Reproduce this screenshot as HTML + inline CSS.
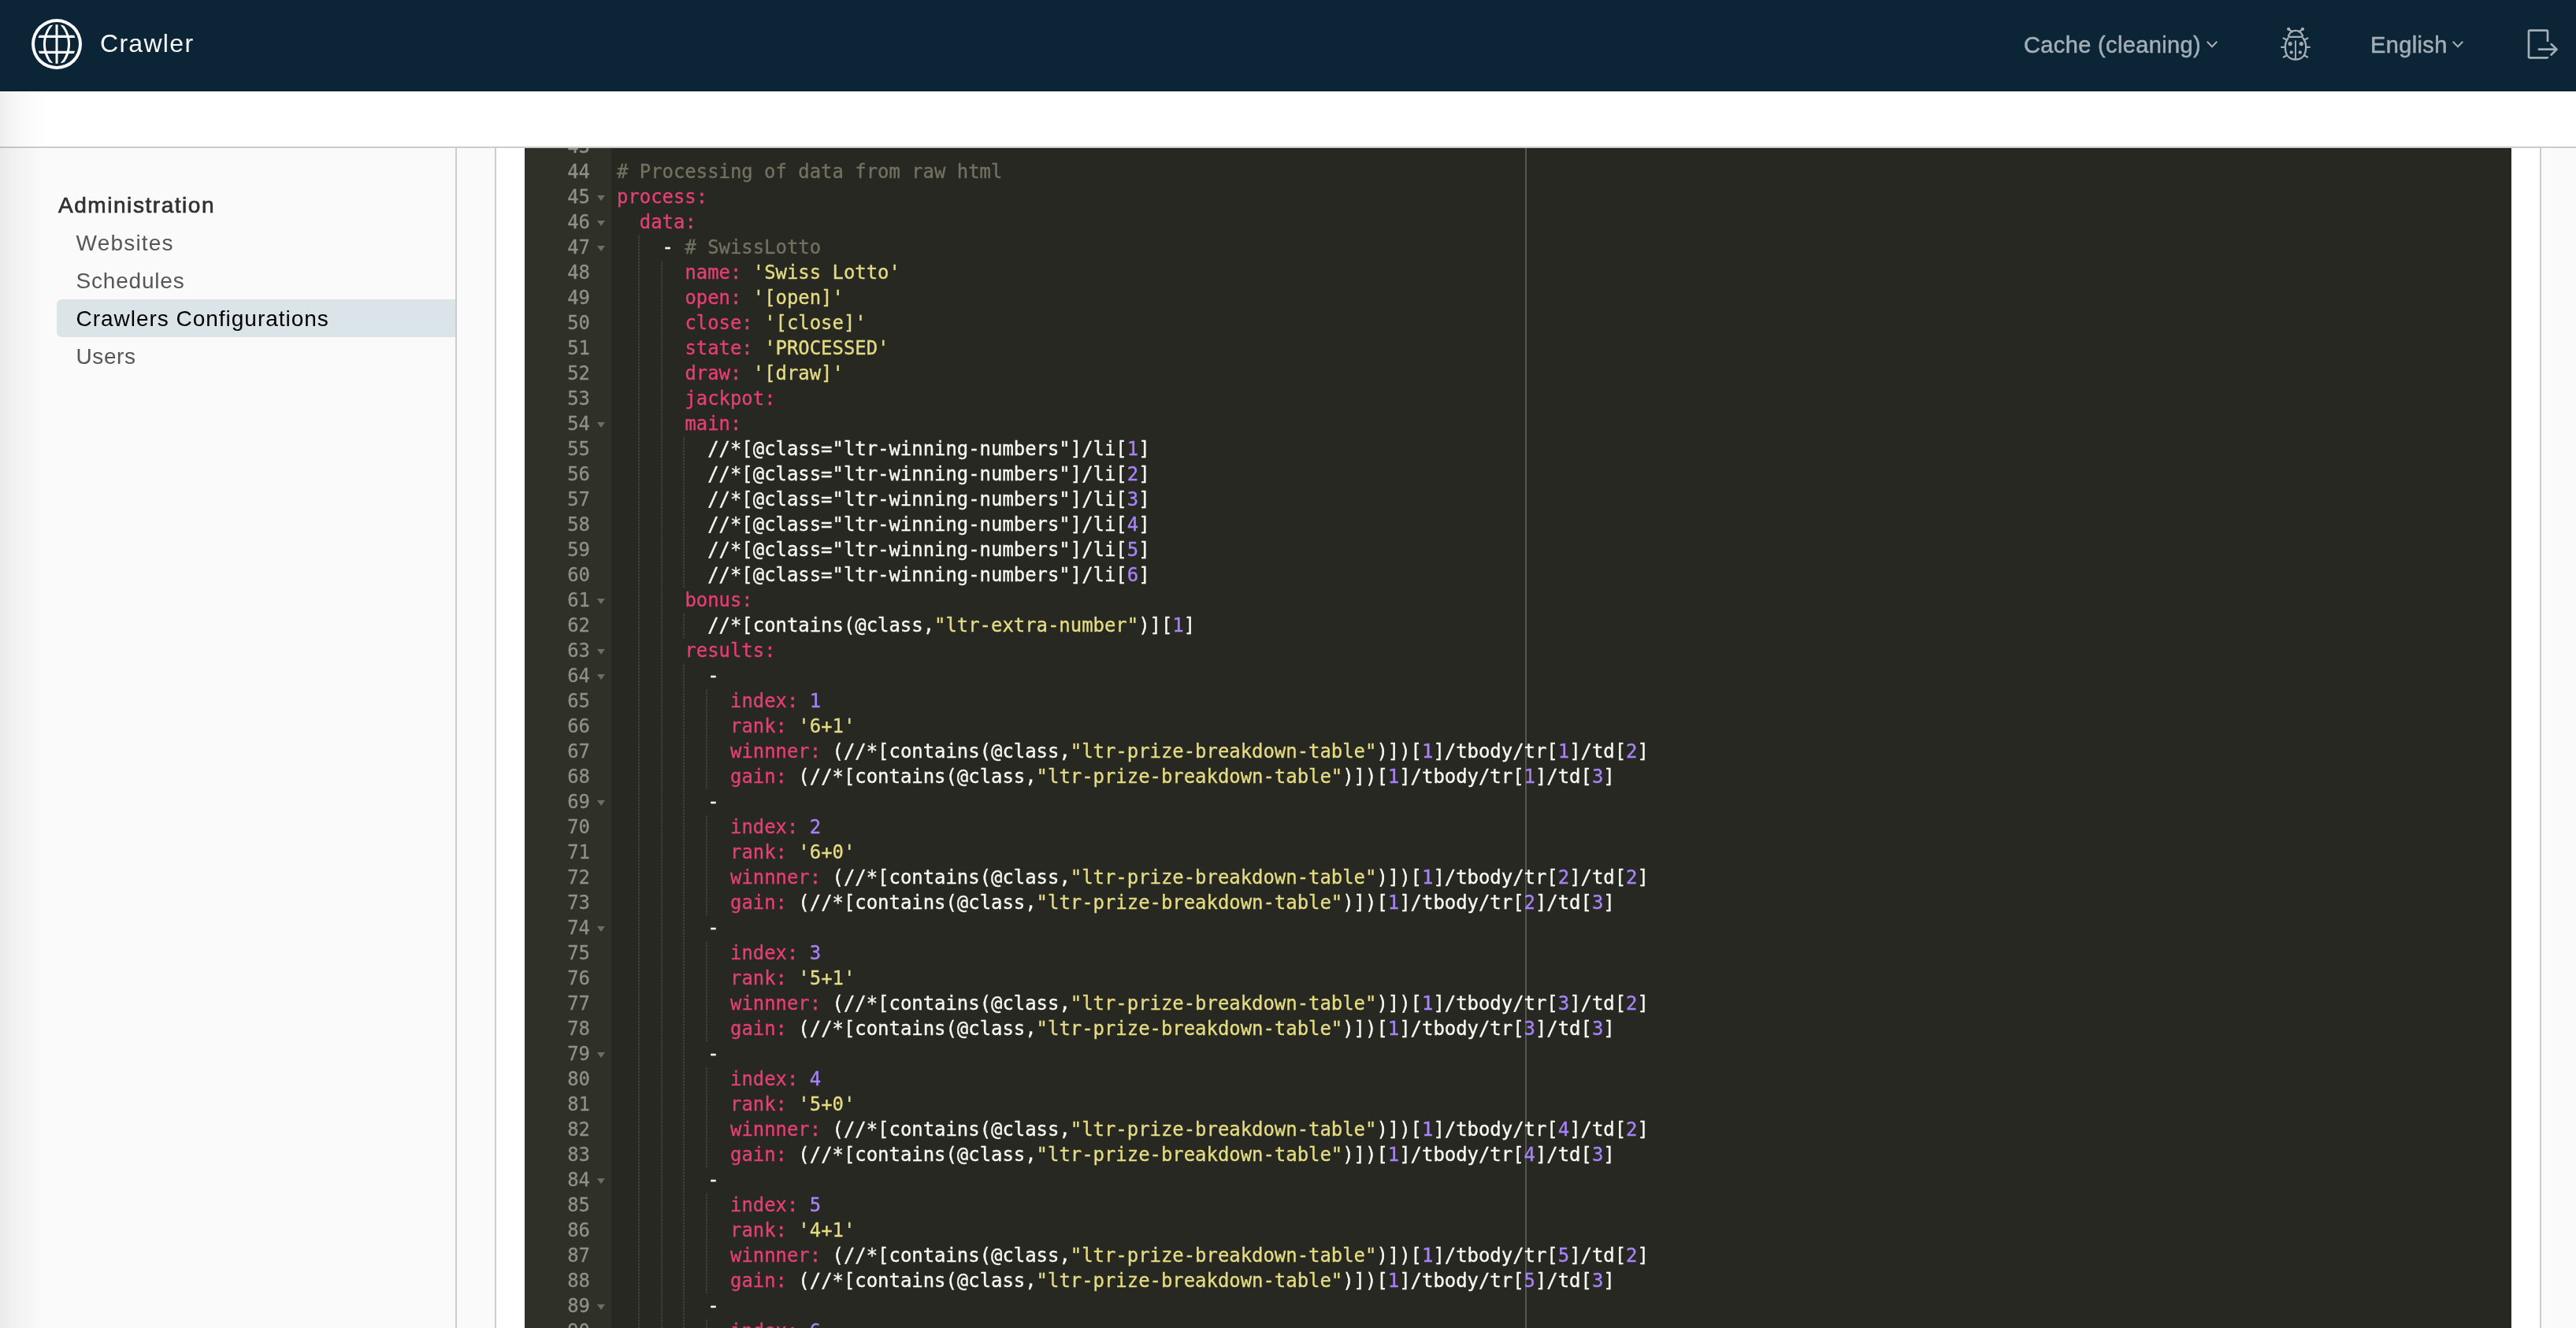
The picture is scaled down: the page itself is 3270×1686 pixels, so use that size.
<!DOCTYPE html>
<html lang="en">
<head>
<meta charset="utf-8">
<title>Crawler</title>
<style>
*{box-sizing:border-box;margin:0;padding:0}
html,body{width:3270px;height:1686px;overflow:hidden;background:#fafafa}
body{position:relative;font-family:"Liberation Sans",sans-serif;color:#565656}
.abs{position:absolute}
/* header */
#hdr{position:absolute;left:0;top:0;width:3270px;height:116px;background:#0b2436}
#hdr .title{will-change:transform;position:absolute;left:126.5px;top:35px;font-size:32px;line-height:40px;color:#fafafa;letter-spacing:1.3px;white-space:nowrap}
#hdr .nav{will-change:transform;position:absolute;top:38.9px;font-size:29px;line-height:36px;color:#a4aeb5;white-space:nowrap;letter-spacing:.36px;-webkit-text-stroke:.5px #a4aeb5}
#hdr svg{position:absolute;overflow:visible}
/* subnav */
#sub{position:absolute;left:0;top:116px;width:3270px;height:72px;background:#fff;border-bottom:2px solid #ccc}
/* sidebar */
#side{position:absolute;left:0;top:188px;width:580px;height:1498px;background:#fafafa;border-right:2px solid #ccc}
#side .grp{will-change:transform;position:absolute;left:73.5px;top:49px;font-size:28px;line-height:48px;color:#313131;-webkit-text-stroke:.7px #313131;letter-spacing:1.55px;white-space:nowrap}
#side .it{will-change:transform;position:absolute;left:72px;width:506px;height:48px;padding-left:24.5px;font-size:28px;line-height:50px;color:#565656;white-space:nowrap;border-radius:6px 0 0 6px}
#side .it.on{background:#dbe4e9;color:#000}
#shade{position:absolute;left:0;top:116px;width:58px;height:1570px;background:linear-gradient(to right,rgba(0,0,0,.062),rgba(0,0,0,.026) 40%,rgba(0,0,0,0))}
/* card */
#card{position:absolute;left:628px;top:188px;width:2598px;height:1498px;background:#fff;border-left:2px solid #ccc;border-right:2px solid #ccc}
/* editor */
#ed{position:absolute;left:666px;top:188px;width:2522px;height:1498px;background:#272822;overflow:hidden;font-family:"DejaVu Sans Mono","Liberation Mono",monospace;font-size:23.918px;line-height:32px;color:#f8f8f2}
#gut{position:absolute;left:0;top:0;width:110px;height:100%;background:#2f3129}
#gl{will-change:transform;position:absolute;left:0;top:-18px;width:110px}
.gc{height:32px;text-align:right;padding-right:27px;-webkit-text-stroke:.3px;color:#8f908a;position:relative;white-space:pre}
.gc i{position:absolute;left:91.5px;top:13.5px;width:0;height:0;border-left:5.25px solid transparent;border-right:5.25px solid transparent;border-top:7px solid #6c6d67}
#pm{position:absolute;left:1270px;top:0;width:2px;height:100%;background:#555651}
#tx{will-change:transform;position:absolute;left:117px;top:-18px;-webkit-text-stroke:.35px}
.ln{height:32px;white-space:pre}
.k{color:#e53f73}.s{color:#e4db82}.n{color:#a783f7}.c{color:#747160}
.ig{display:inline-block;height:32px;vertical-align:top;background:repeating-linear-gradient(to bottom,#2f3029 0,#2f3029 2px,#3e3f39 2px,#3e3f39 4px) right top/2px 100% no-repeat}
</style>
</head>
<body>
<div id="sub"></div>
<div id="side">
  <div class="grp">Administration</div>
  <div class="it" style="top:96px;letter-spacing:1.21px">Websites</div>
  <div class="it" style="top:144px;letter-spacing:.8px">Schedules</div>
  <div class="it on" style="top:192px;letter-spacing:.98px">Crawlers Configurations</div>
  <div class="it" style="top:240px;letter-spacing:.6px">Users</div>
</div>
<div id="card"></div>
<div id="shade"></div>
<div id="hdr">
  <svg style="left:36px;top:20px" width="72" height="72" viewBox="0 0 36 36" fill="#fafafa">
    <path d="M26.54,18a19.38,19.38,0,0,0-.43-4h3.6a12.3,12.3,0,0,0-.67-1.6H25.69A19.72,19.72,0,0,0,22.8,6.53a12.3,12.3,0,0,0-2.55-.76,17.83,17.83,0,0,1,3.89,6.59H18.75V5.6c-.25,0-.51,0-.77,0s-.49,0-.73,0v6.77H11.86a17.83,17.83,0,0,1,3.9-6.6,12.28,12.28,0,0,0-2.54.75,19.72,19.72,0,0,0-2.91,5.85H6.94A12.3,12.3,0,0,0,6.26,14H9.89a19.38,19.38,0,0,0-.43,4,19.67,19.67,0,0,0,.5,4.37H6.42A12.34,12.34,0,0,0,7.16,24h3.23a19.32,19.32,0,0,0,2.69,5.36,12.28,12.28,0,0,0,2.61.79A17.91,17.91,0,0,1,12,24h5.26v6.34c.24,0,.49,0,.73,0s.51,0,.77,0V24H24a17.9,17.9,0,0,1-3.7,6.15,12.28,12.28,0,0,0,2.62-.81A19.32,19.32,0,0,0,25.61,24h3.2a12.34,12.34,0,0,0,.74-1.6H26A19.67,19.67,0,0,0,26.54,18Zm-9.29,4.37H11.51a17.69,17.69,0,0,1-.09-8.4h5.83Zm7.24,0H18.75V14h5.83A18.21,18.21,0,0,1,25,18,18.12,18.12,0,0,1,24.49,22.37Z"/>
    <path d="M18,2A16,16,0,1,0,34,18,16,16,0,0,0,18,2Zm0,30A14,14,0,1,1,32,18,14,14,0,0,1,18,32Z"/>
  </svg>
  <div class="title">Crawler</div>
  <div class="nav" id="n1" style="left:2568.5px">Cache (cleaning)</div>
  <svg style="left:2801px;top:52px" width="14" height="9" viewBox="0 0 14 9" fill="none" stroke="#a4aeb5" stroke-width="2"><path d="M0.7,0.7 L7,7.3 L13.3,0.7"/></svg>
  <!-- bug -->
  <svg id="bug" style="left:2890px;top:32px" width="48" height="48" viewBox="0 0 48 48" fill="none" stroke="#a4aeb5" stroke-width="2.4" stroke-linecap="round" stroke-linejoin="round">
    <circle cx="15.1" cy="4.8" r="1.5" fill="#a4aeb5" stroke-width="1.2"/>
    <circle cx="33" cy="4.8" r="1.5" fill="#a4aeb5" stroke-width="1.2"/>
    <path d="M15.1,4.8 L19.8,8.4 M33,4.8 L28.3,8.4" stroke-width="2.2"/>
    <path d="M17,14.9 L31,14.9 Q33.6,14.9 32.6,12.6 Q30.3,6.9 24,6.9 Q17.7,6.9 15.4,12.6 Q14.4,14.9 17,14.9 Z"/>
    <path d="M14.4,16.4 C12,19.5 10.9,23.5 10.9,27.8 C10.9,37.5 15.5,43.6 24,43.6 C32.5,43.6 37.2,37.5 37.2,27.8 C37.2,23.5 36,19.5 33.6,16.4"/>
    <path d="M23.95,20.2 L23.95,42.6" stroke-width="2"/>
    <circle cx="17.1" cy="23.6" r="1.7" fill="#a4aeb5" stroke-width="1.8"/>
    <circle cx="31.3" cy="23.6" r="1.7" fill="#a4aeb5" stroke-width="1.8"/>
    <circle cx="18.7" cy="34.4" r="1.4" fill="#a4aeb5" stroke-width="1.5"/>
    <circle cx="29.8" cy="34.4" r="1.4" fill="#a4aeb5" stroke-width="1.5"/>
    <path d="M12.6,18.4 L8.6,16.4 M10.4,27.8 L6.1,27.8 M13,38.2 L8.8,40.5" stroke-width="2.2"/>
    <path d="M35.4,18.4 L39.4,16.4 M37.6,27.8 L41.9,27.8 M35,38.2 L39.2,40.5" stroke-width="2.2"/>
  </svg>
  <div class="nav" id="n2" style="left:3009px">English</div>
  <svg style="left:3113px;top:52px" width="14" height="9" viewBox="0 0 14 9" fill="none" stroke="#a4aeb5" stroke-width="2"><path d="M0.7,0.7 L7,7.3 L13.3,0.7"/></svg>
  <!-- logout -->
  <svg style="left:3202px;top:31.5px" width="48" height="48" viewBox="0 0 36 36" fill="#a4aeb5">
    <path d="M7,6H23v9.8h2V6a2,2,0,0,0-2-2H7A2,2,0,0,0,5,6V30a2,2,0,0,0,2,2H23a2,2,0,0,0,2-2H7Z"/>
    <path d="M28.16,17.28a1,1,0,0,0-1.41,1.41L30.13,22H15.63a1,1,0,0,0-1,1,1,1,0,0,0,1,1h14.5l-3.38,3.46a1,1,0,1,0,1.41,1.41L34,23.07Z"/>
  </svg>
</div>
<div id="ed">
  <div id="gut"><div id="gl">
<div class="gc">43</div>
<div class="gc">44</div>
<div class="gc">45<i></i></div>
<div class="gc">46<i></i></div>
<div class="gc">47<i></i></div>
<div class="gc">48</div>
<div class="gc">49</div>
<div class="gc">50</div>
<div class="gc">51</div>
<div class="gc">52</div>
<div class="gc">53</div>
<div class="gc">54<i></i></div>
<div class="gc">55</div>
<div class="gc">56</div>
<div class="gc">57</div>
<div class="gc">58</div>
<div class="gc">59</div>
<div class="gc">60</div>
<div class="gc">61<i></i></div>
<div class="gc">62</div>
<div class="gc">63<i></i></div>
<div class="gc">64<i></i></div>
<div class="gc">65</div>
<div class="gc">66</div>
<div class="gc">67</div>
<div class="gc">68</div>
<div class="gc">69<i></i></div>
<div class="gc">70</div>
<div class="gc">71</div>
<div class="gc">72</div>
<div class="gc">73</div>
<div class="gc">74<i></i></div>
<div class="gc">75</div>
<div class="gc">76</div>
<div class="gc">77</div>
<div class="gc">78</div>
<div class="gc">79<i></i></div>
<div class="gc">80</div>
<div class="gc">81</div>
<div class="gc">82</div>
<div class="gc">83</div>
<div class="gc">84<i></i></div>
<div class="gc">85</div>
<div class="gc">86</div>
<div class="gc">87</div>
<div class="gc">88</div>
<div class="gc">89<i></i></div>
<div class="gc">90</div>
<div class="gc">91</div>
  </div></div>
  <div id="pm"></div>
  <div id="tx">
<div class="ln"></div>
<div class="ln"><span class="c"># Processing of data from raw html</span></div>
<div class="ln"><span class="k">process:</span></div>
<div class="ln">  <span class="k">data</span><span class="k">:</span></div>
<div class="ln"><span class="ig">  </span>  - <span class="c"># SwissLotto</span></div>
<div class="ln"><span class="ig">  </span><span class="ig">  </span>  <span class="k">name:</span> <span class="s">'Swiss Lotto'</span></div>
<div class="ln"><span class="ig">  </span><span class="ig">  </span>  <span class="k">open:</span> <span class="s">'[open]'</span></div>
<div class="ln"><span class="ig">  </span><span class="ig">  </span>  <span class="k">close:</span> <span class="s">'[close]'</span></div>
<div class="ln"><span class="ig">  </span><span class="ig">  </span>  <span class="k">state:</span> <span class="s">'PROCESSED'</span></div>
<div class="ln"><span class="ig">  </span><span class="ig">  </span>  <span class="k">draw:</span> <span class="s">'[draw]'</span></div>
<div class="ln"><span class="ig">  </span><span class="ig">  </span>  <span class="k">jackpot:</span></div>
<div class="ln"><span class="ig">  </span><span class="ig">  </span>  <span class="k">main:</span></div>
<div class="ln"><span class="ig">  </span><span class="ig">  </span><span class="ig">  </span>  //*[@class="ltr-winning-numbers"]/li[<span class="n">1</span>]</div>
<div class="ln"><span class="ig">  </span><span class="ig">  </span><span class="ig">  </span>  //*[@class="ltr-winning-numbers"]/li[<span class="n">2</span>]</div>
<div class="ln"><span class="ig">  </span><span class="ig">  </span><span class="ig">  </span>  //*[@class="ltr-winning-numbers"]/li[<span class="n">3</span>]</div>
<div class="ln"><span class="ig">  </span><span class="ig">  </span><span class="ig">  </span>  //*[@class="ltr-winning-numbers"]/li[<span class="n">4</span>]</div>
<div class="ln"><span class="ig">  </span><span class="ig">  </span><span class="ig">  </span>  //*[@class="ltr-winning-numbers"]/li[<span class="n">5</span>]</div>
<div class="ln"><span class="ig">  </span><span class="ig">  </span><span class="ig">  </span>  //*[@class="ltr-winning-numbers"]/li[<span class="n">6</span>]</div>
<div class="ln"><span class="ig">  </span><span class="ig">  </span>  <span class="k">bonus:</span></div>
<div class="ln"><span class="ig">  </span><span class="ig">  </span><span class="ig">  </span>  //*[contains(@class,<span class="s">"ltr-extra-number"</span>)][<span class="n">1</span>]</div>
<div class="ln"><span class="ig">  </span><span class="ig">  </span>  <span class="k">results:</span></div>
<div class="ln"><span class="ig">  </span><span class="ig">  </span><span class="ig">  </span>  -</div>
<div class="ln"><span class="ig">  </span><span class="ig">  </span><span class="ig">  </span><span class="ig">  </span>  <span class="k">index:</span> <span class="n">1</span></div>
<div class="ln"><span class="ig">  </span><span class="ig">  </span><span class="ig">  </span><span class="ig">  </span>  <span class="k">rank:</span> <span class="s">'6+1'</span></div>
<div class="ln"><span class="ig">  </span><span class="ig">  </span><span class="ig">  </span><span class="ig">  </span>  <span class="k">winnner:</span> (//*[contains(@class,<span class="s">"ltr-prize-breakdown-table"</span>)])[<span class="n">1</span>]/tbody/tr[<span class="n">1</span>]/td[<span class="n">2</span>]</div>
<div class="ln"><span class="ig">  </span><span class="ig">  </span><span class="ig">  </span><span class="ig">  </span>  <span class="k">gain:</span> (//*[contains(@class,<span class="s">"ltr-prize-breakdown-table"</span>)])[<span class="n">1</span>]/tbody/tr[<span class="n">1</span>]/td[<span class="n">3</span>]</div>
<div class="ln"><span class="ig">  </span><span class="ig">  </span><span class="ig">  </span>  -</div>
<div class="ln"><span class="ig">  </span><span class="ig">  </span><span class="ig">  </span><span class="ig">  </span>  <span class="k">index:</span> <span class="n">2</span></div>
<div class="ln"><span class="ig">  </span><span class="ig">  </span><span class="ig">  </span><span class="ig">  </span>  <span class="k">rank:</span> <span class="s">'6+0'</span></div>
<div class="ln"><span class="ig">  </span><span class="ig">  </span><span class="ig">  </span><span class="ig">  </span>  <span class="k">winnner:</span> (//*[contains(@class,<span class="s">"ltr-prize-breakdown-table"</span>)])[<span class="n">1</span>]/tbody/tr[<span class="n">2</span>]/td[<span class="n">2</span>]</div>
<div class="ln"><span class="ig">  </span><span class="ig">  </span><span class="ig">  </span><span class="ig">  </span>  <span class="k">gain:</span> (//*[contains(@class,<span class="s">"ltr-prize-breakdown-table"</span>)])[<span class="n">1</span>]/tbody/tr[<span class="n">2</span>]/td[<span class="n">3</span>]</div>
<div class="ln"><span class="ig">  </span><span class="ig">  </span><span class="ig">  </span>  -</div>
<div class="ln"><span class="ig">  </span><span class="ig">  </span><span class="ig">  </span><span class="ig">  </span>  <span class="k">index:</span> <span class="n">3</span></div>
<div class="ln"><span class="ig">  </span><span class="ig">  </span><span class="ig">  </span><span class="ig">  </span>  <span class="k">rank:</span> <span class="s">'5+1'</span></div>
<div class="ln"><span class="ig">  </span><span class="ig">  </span><span class="ig">  </span><span class="ig">  </span>  <span class="k">winnner:</span> (//*[contains(@class,<span class="s">"ltr-prize-breakdown-table"</span>)])[<span class="n">1</span>]/tbody/tr[<span class="n">3</span>]/td[<span class="n">2</span>]</div>
<div class="ln"><span class="ig">  </span><span class="ig">  </span><span class="ig">  </span><span class="ig">  </span>  <span class="k">gain:</span> (//*[contains(@class,<span class="s">"ltr-prize-breakdown-table"</span>)])[<span class="n">1</span>]/tbody/tr[<span class="n">3</span>]/td[<span class="n">3</span>]</div>
<div class="ln"><span class="ig">  </span><span class="ig">  </span><span class="ig">  </span>  -</div>
<div class="ln"><span class="ig">  </span><span class="ig">  </span><span class="ig">  </span><span class="ig">  </span>  <span class="k">index:</span> <span class="n">4</span></div>
<div class="ln"><span class="ig">  </span><span class="ig">  </span><span class="ig">  </span><span class="ig">  </span>  <span class="k">rank:</span> <span class="s">'5+0'</span></div>
<div class="ln"><span class="ig">  </span><span class="ig">  </span><span class="ig">  </span><span class="ig">  </span>  <span class="k">winnner:</span> (//*[contains(@class,<span class="s">"ltr-prize-breakdown-table"</span>)])[<span class="n">1</span>]/tbody/tr[<span class="n">4</span>]/td[<span class="n">2</span>]</div>
<div class="ln"><span class="ig">  </span><span class="ig">  </span><span class="ig">  </span><span class="ig">  </span>  <span class="k">gain:</span> (//*[contains(@class,<span class="s">"ltr-prize-breakdown-table"</span>)])[<span class="n">1</span>]/tbody/tr[<span class="n">4</span>]/td[<span class="n">3</span>]</div>
<div class="ln"><span class="ig">  </span><span class="ig">  </span><span class="ig">  </span>  -</div>
<div class="ln"><span class="ig">  </span><span class="ig">  </span><span class="ig">  </span><span class="ig">  </span>  <span class="k">index:</span> <span class="n">5</span></div>
<div class="ln"><span class="ig">  </span><span class="ig">  </span><span class="ig">  </span><span class="ig">  </span>  <span class="k">rank:</span> <span class="s">'4+1'</span></div>
<div class="ln"><span class="ig">  </span><span class="ig">  </span><span class="ig">  </span><span class="ig">  </span>  <span class="k">winnner:</span> (//*[contains(@class,<span class="s">"ltr-prize-breakdown-table"</span>)])[<span class="n">1</span>]/tbody/tr[<span class="n">5</span>]/td[<span class="n">2</span>]</div>
<div class="ln"><span class="ig">  </span><span class="ig">  </span><span class="ig">  </span><span class="ig">  </span>  <span class="k">gain:</span> (//*[contains(@class,<span class="s">"ltr-prize-breakdown-table"</span>)])[<span class="n">1</span>]/tbody/tr[<span class="n">5</span>]/td[<span class="n">3</span>]</div>
<div class="ln"><span class="ig">  </span><span class="ig">  </span><span class="ig">  </span>  -</div>
<div class="ln"><span class="ig">  </span><span class="ig">  </span><span class="ig">  </span><span class="ig">  </span>  <span class="k">index:</span> <span class="n">6</span></div>
<div class="ln"><span class="ig">  </span><span class="ig">  </span><span class="ig">  </span><span class="ig">  </span>  <span class="k">rank:</span> <span class="s">'4+0'</span></div>
  </div>
</div>
</body>
</html>
